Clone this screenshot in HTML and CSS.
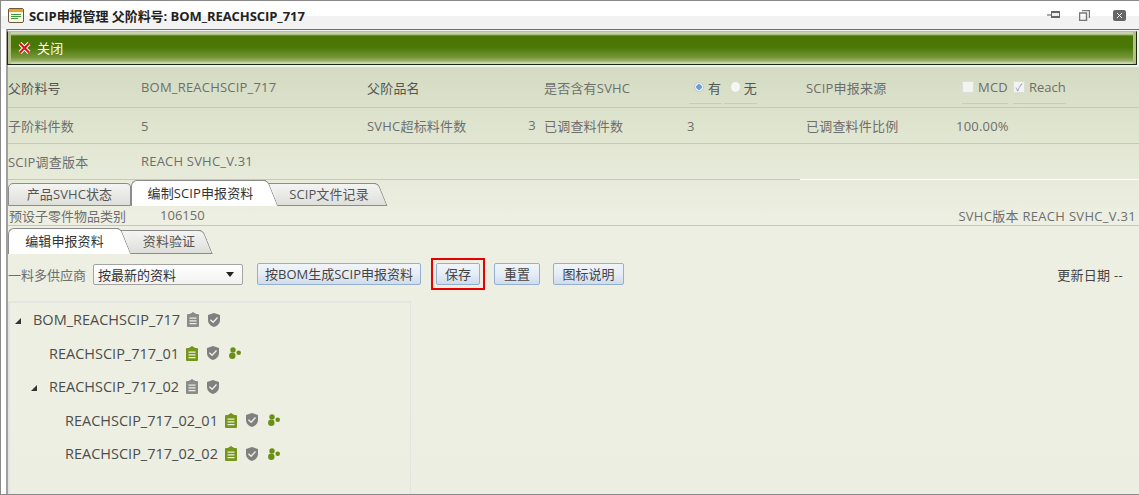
FILE: index.html
```html
<!DOCTYPE html>
<html>
<head>
  <meta charset="utf-8">
  <link rel="stylesheet" href="styles.css">
</head>
<body>
  <svg class="icon-defs" width="0" height="0">
    <symbol id="i-clip" viewBox="0 0 12 15">
      <path fill-rule="evenodd" d="M1 2h2.500V1h1.500a1 1 0 0 1 2 0h1.500v1H11a1 1 0 0 1 1 1v11a1 1 0 0 1-1 1H1a1 1 0 0 1-1-1V3a1 1 0 0 1 1-1zM2.500 5.500v1.300h7V5.500zM2.500 8.200v1.300h7V8.200zM2.500 10.900v1.300h7v-1.300z"/>
    </symbol>
    <symbol id="i-shield" viewBox="0 0 12 14">
      <path fill-rule="evenodd" d="M6 0l6 2v5c0 3.500-2.500 5.800-6 7-3.500-1.200-6-3.500-6-7V2zM2.800 6.300L1.900 7.300 5.200 10.200 10 4.900 9 4 5.100 8.200z"/>
    </symbol>
    <symbol id="i-dots" viewBox="0 0 12 12">
      <circle cx="4" cy="2.900" r="2.700"/>
      <circle cx="9.700" cy="5.700" r="2.300"/>
      <circle cx="3.300" cy="8.800" r="3.200"/>
    </symbol>
  </svg>

  <div class="window">
    <div class="titlebar">
      <svg class="app-icon" width="16" height="15" viewBox="0 0 16 15">
        <rect x=".5" y=".5" width="15" height="14" rx="1.500" fill="#fdfbe8" stroke="#6b5a3a"/>
        <rect x="1" y="1" width="14" height="3" fill="#f0a030"/>
        <path d="M3 6.500h10M3 8.500h10M3 10.500h7" stroke="#3c9a3c"/>
      </svg>
      <div class="title">SCIP申报管理 父阶料号: BOM_REACHSCIP_717</div>
      <div class="win-btns">
        <svg class="win-pin" width="14" height="10" viewBox="0 0 14 10"><path d="M0 5h4" stroke="#555"/><rect x="4" y="1" width="9" height="7" fill="#666"/><rect x="5" y="3" width="7" height="3" fill="#eee"/></svg>
        <svg class="win-max" width="11" height="11" viewBox="0 0 11 11"><path d="M3 .5h7.500V8M.5 3h7v7.500h-7z" fill="none" stroke="#777" stroke-width="1.500"/></svg>
        <svg class="win-close" width="13" height="11" viewBox="0 0 13 11"><rect width="13" height="11" rx="2" fill="#666"/><path d="M4 3l5 5M9 3l-5 5" stroke="#fff"/></svg>
      </div>
    </div>

    <div class="content">
      <div class="actionbar">
        <div class="close-btn">
          <svg width="13" height="12" viewBox="0 0 13 12"><path d="M2 1.500l9 9M11 1.500l-9 9" stroke="#fff" stroke-width="4"/><path d="M2 1.500l9 9M11 1.500l-9 9" stroke="#d81818" stroke-width="2.200"/></svg>
          <span>关闭</span>
        </div>
      </div>

      <div class="panel">
        <div class="info-grid">
          <div class="info-row first">
            <div class="dark">父阶料号</div>
            <div>BOM_REACHSCIP_717</div>
            <div class="dark">父阶品名</div>
            <div>是否含有SVHC</div>
            <div class="choice radios">
              <span class="choice-item"><i class="radio on"></i>有</span>
              <span class="choice-item"><i class="radio"></i>无</span>
            </div>
            <div>SCIP申报来源</div>
            <div class="choice checks">
              <span class="choice-item"><i class="check"></i>MCD</span>
              <span class="choice-item"><i class="check">✓</i>Reach</span>
            </div>
          </div>
          <div class="info-row second">
            <div>子阶料件数</div>
            <div>5</div>
            <div class="split"><span>SVHC超标料件数</span><span>3</span></div>
            <div>已调查料件数</div>
            <div>3</div>
            <div>已调查料件比例</div>
            <div>100.00%</div>
          </div>
          <div class="info-row third">
            <div>SCIP调查版本</div>
            <div>REACH SVHC_V.31</div>
          </div>
        </div>

        <div class="tabs top-tabs">
          <div class="tab">产品SVHC状态</div>
          <div class="tab slant active">编制SCIP申报资料</div>
          <div class="tab slant">SCIP文件记录</div>
        </div>

        <div class="preset-row">
          <div class="preset-left"><span>预设子零件物品类别</span><span>106150</span></div>
          <div>SVHC版本 REACH SVHC_V.31</div>
        </div>

        <div class="tabs sub-tabs">
          <div class="tab slant active">编辑申报资料</div>
          <div class="tab slant">资料验证</div>
        </div>

        <div class="tools">
          <span class="tools-label">一料多供应商</span>
          <div class="select"><span>按最新的资料</span><i class="caret"></i></div>
          <div class="btn gen">按BOM生成SCIP申报资料</div>
          <div class="btn save">保存</div>
          <div class="btn reset">重置</div>
          <div class="btn legend">图标说明</div>
          <div class="update">更新日期 --</div>
        </div>

        <div class="tree">
          <div class="node"><i class="arrow"></i><span>BOM_REACHSCIP_717</span>
            <svg class="ic grey"><use href="#i-clip"/></svg><svg class="ic shield"><use href="#i-shield"/></svg></div>
          <div class="node lv1"><span>REACHSCIP_717_01</span>
            <svg class="ic green"><use href="#i-clip"/></svg><svg class="ic shield"><use href="#i-shield"/></svg><svg class="ic dots"><use href="#i-dots"/></svg></div>
          <div class="node lv1 parent"><i class="arrow"></i><span>REACHSCIP_717_02</span>
            <svg class="ic grey"><use href="#i-clip"/></svg><svg class="ic shield"><use href="#i-shield"/></svg></div>
          <div class="node lv2"><span>REACHSCIP_717_02_01</span>
            <svg class="ic green"><use href="#i-clip"/></svg><svg class="ic shield"><use href="#i-shield"/></svg><svg class="ic dots"><use href="#i-dots"/></svg></div>
          <div class="node lv2"><span>REACHSCIP_717_02_02</span>
            <svg class="ic green"><use href="#i-clip"/></svg><svg class="ic shield"><use href="#i-shield"/></svg><svg class="ic dots"><use href="#i-dots"/></svg></div>
        </div>
      </div>
    </div>
  </div>
</body>
</html>
```

FILE: styles.css
```css
* {
  margin: 0;
  padding: 0;
  box-sizing: border-box;
}

html, body {
  height: 100%;
  overflow: hidden;
}

body {
  font-family: "Open Sans", "Noto Sans CJK SC", sans-serif;
  font-size: 13px;
  letter-spacing: .2px;
  color: #6e6e6e;
  background: #fff;
}

.icon-defs {
  display: block;
  height: 0;
}

.window {
  width: 1139px;
  height: 495px;
  border: 1px solid #8a8a8a;
  border-right: 0;
  display: flex;
  flex-direction: column;
  background: #fff;
}

.titlebar {
  height: 28px;
  display: flex;
  align-items: center;
  padding-left: 7px;
  flex-shrink: 0;
  background: linear-gradient(#fff 15px, #f2f2f2 15px);
}

.app-icon {
  margin-right: 5px;
}

.title {
  font-size: 13px;
  font-weight: 700;
  letter-spacing: -.06px;
  color: #222;
}

.win-btns {
  margin-left: auto;
  display: flex;
  align-items: center;
  padding-right: 13px;
}

.win-max {
  margin-left: 18px;
}

.win-close {
  margin-left: 23px;
}

.content {
  flex: 1;
  margin-left: 5px;
  border-left: 2px solid #a0a0a0;
  border-top: 1px solid #66707a;
  display: flex;
  flex-direction: column;
  min-height: 0;
  background: #f2f2f2;
}

.actionbar {
  height: 34px;
  margin: 1px 2px 2px -1px;
  border: 1px solid #1c2a10;
  border-top-color: #b5c19a;
  background: linear-gradient(#c9d2b0 0, #c9d2b0 2px, #4a7606 4px, #4a7606 15px, #719535 25px, #9cb168 29px, #d0d8b8 31px);
  box-shadow: inset 3px 0 0 #b3c188, inset -3px 0 0 #b3c188;
  display: flex;
  align-items: center;
  padding-left: 10px;
  flex-shrink: 0;
}

.close-btn {
  display: flex;
  align-items: center;
  gap: 6px;
  color: #fff;
  padding-bottom: 1px;
}

.panel {
  flex: 1;
  min-height: 0;
  background: linear-gradient(#d4dbc2 0, #dfe4cf 60px, #e8ebda 115px, #edefe2 150px, #edefe3 340px, #ebeee0 100%);
  display: flex;
  flex-direction: column;
}

.info-row {
  display: grid;
  grid-template-columns: 133px 226px 177px 143px 119px 150px 1fr;
  align-items: center;
  border-bottom: 1px solid #c6c8c0;
  white-space: nowrap;
}

.info-row.first {
  height: 41px;
}

.info-row.second {
  height: 36px;
}

.info-row.third {
  height: 36px;
  padding-bottom: 1px;
  border-image: linear-gradient(to right, #c6c8c0 0, #c6c8c0 70%, #fff 70%) 1;
}

.dark {
  color: #555;
}

.split {
  display: flex;
  justify-content: space-between;
  padding-right: 8px;
}

.choice {
  display: flex;
  gap: 2px;
}

.choice-item {
  display: flex;
  align-items: center;
  gap: 4px;
  height: 36px;
  position: relative;
}

.choice-item::after {
  content: "";
  position: absolute;
  left: 0;
  right: 0;
  bottom: 1px;
  border-bottom: 1px solid #c5cbc9;
}

.radios {
  padding-left: 2px;
}

.radios .choice-item {
  color: #555;
  width: 33px;
  padding-left: 5px;
}

.radios .choice-item + .choice-item {
  padding-left: 7px;
}

.checks {
  padding-left: 6px;
  gap: 5px;
}

.checks .choice-item + .choice-item {
  letter-spacing: 0;
}

.radio {
  width: 10px;
  height: 10px;
  border-radius: 50%;
  background: #f6f7f4;
}

.radio.on {
  background: radial-gradient(circle, #6aa0d0 0 2.500px, #e8eef0 3px);
  border: 1px solid #c3c9d2;
}

.check {
  width: 12px;
  height: 12px;
  background: #f3f4f0;
  border: 1px solid #dcdfd8;
  color: #7a93c8;
  font-style: normal;
  font-size: 10px;
  line-height: 10px;
  text-align: center;
}

.tabs {
  display: flex;
  align-items: flex-end;
  flex-shrink: 0;
}

.top-tabs {
  height: 26px;
}

.sub-tabs {
  height: 28px;
}

.tab {
  position: relative;
  height: 23px;
  line-height: 20px;
  text-align: center;
  color: #555;
  background: linear-gradient(#f4f4f2, #dedfdb);
  border: 1px solid #8c8c8c;
  border-radius: 5px 4px 0 0;
  z-index: 1;
  letter-spacing: .1px;
  white-space: nowrap;
}

.top-tabs .tab:nth-child(1) {
  width: 123px;
}

.top-tabs .tab:nth-child(2) {
  width: 135px;
  height: 26px;
  line-height: 24px;
  padding-left: 3px;
  border-right: 0;
  border-bottom: 0;
  border-radius: 6px 0 0 0;
}

.top-tabs .tab:nth-child(3) {
  width: 104px;
  margin-left: 6px;
  padding-left: 10px;
  border-left: 0;
  border-right: 0;
  border-radius: 0;
}

.sub-tabs .tab:nth-child(1) {
  width: 111px;
  height: 26px;
  line-height: 25px;
  padding-left: 1px;
  border-right: 0;
  border-bottom: 0;
  border-radius: 6px 0 0 0;
}

.sub-tabs .tab:nth-child(2) {
  width: 76px;
  height: 24px;
  margin-left: 6px;
  padding-left: 12px;
  border-left: 0;
  border-right: 0;
  border-radius: 0;
}

.tab.active {
  background: #fff;
  color: #333;
  z-index: 3;
}

.tab.slant::after {
  content: "";
  position: absolute;
  top: -1px;
  bottom: 0;
  right: -7px;
  width: 14px;
  background: inherit;
  border-top: 1px solid #8c8c8c;
  border-right: 1px solid #8c8c8c;
  border-radius: 0 5px 0 0;
  transform: skewX(22deg);
  z-index: -1;
}

.top-tabs .tab:nth-child(3)::after,
.sub-tabs .tab:nth-child(2)::after {
  bottom: -1px;
  border-bottom: 1px solid #8c8c8c;
}

.top-tabs .tab:nth-child(3)::before,
.sub-tabs .tab:nth-child(2)::before {
  content: "";
  position: absolute;
  top: -1px;
  left: -6px;
  width: 10px;
  height: 12px;
  background: linear-gradient(#f4f4f2, #ecedea);
  border-top: 1px solid #8c8c8c;
  z-index: -2;
}

.preset-row {
  height: 20px;
  display: flex;
  justify-content: space-between;
  align-items: center;
  border-bottom: 1px solid #c6c8c0;
  padding-right: 3px;
  flex-shrink: 0;
  white-space: nowrap;
  letter-spacing: .3px;
}

.preset-left {
  display: flex;
  gap: 34px;
  padding-left: 1px;
  letter-spacing: 0;
}

.tools {
  height: 47px;
  display: flex;
  align-items: center;
  white-space: nowrap;
  flex-shrink: 0;
  padding-bottom: 7px;
}

.tools-label {
  width: 85px;
  letter-spacing: 0;
}

.select {
  width: 150px;
  height: 21px;
  border: 1px solid #a3a3a3;
  border-radius: 2px;
  background: linear-gradient(#fff, #f1f1ee);
  color: #333;
  display: flex;
  align-items: center;
  justify-content: space-between;
  padding: 0 8px 0 4px;
  margin-right: 14px;
  letter-spacing: 0;
}

.caret {
  border: 4px solid transparent;
  border-top: 5px solid #222;
  border-bottom: 0;
}

.btn {
  height: 22px;
  line-height: 20px;
  text-align: center;
  border: 1px solid #94b0d0;
  border-radius: 2px;
  background: linear-gradient(#f1f5fa, #e6edf6 50%, #cfdcec);
  color: #444;
  letter-spacing: 0;
}

.btn.gen {
  width: 164px;
  margin-right: 15px;
}

.btn.save {
  width: 44px;
  margin-right: 14px;
  position: relative;
}

.btn.save::after {
  content: "";
  position: absolute;
  left: -6px;
  right: -6px;
  top: -6px;
  bottom: -6px;
  border: 2px solid #e60000;
}

.btn.reset {
  width: 46px;
  margin-right: 13px;
}

.btn.legend {
  width: 71px;
}

.update {
  margin-left: auto;
  padding-right: 16px;
  color: #444;
  letter-spacing: .3px;
}

.tree {
  width: 403px;
  flex: 1;
  min-height: 0;
  border: 2px solid #e4e5e0;
  border-bottom: 0;
  border-right-width: 1px;
}

.node {
  height: 33.500px;
  display: flex;
  align-items: center;
  padding-left: 23px;
  position: relative;
  font-size: 14.500px;
  letter-spacing: 0;
  color: #4d4d4d;
}

.node.lv1 {
  padding-left: 39px;
}

.node.lv2 {
  padding-left: 55px;
}

.arrow {
  position: absolute;
  left: 5px;
  top: 15px;
  width: 0;
  height: 0;
  border-left: 6px solid transparent;
  border-bottom: 6px solid #333;
}

.parent .arrow {
  left: 21px;
}

.ic {
  flex-shrink: 0;
}

.grey, .green {
  width: 12px;
  height: 15px;
  margin-left: 7px;
  margin-right: 9px;
}

.grey {
  fill: #8b8b8b;
}

.green {
  fill: #74961a;
}

.shield {
  width: 12px;
  height: 14px;
  fill: #808080;
  margin-right: 10px;
}

.dots {
  width: 12px;
  height: 12px;
  fill: #689013;
}
```
